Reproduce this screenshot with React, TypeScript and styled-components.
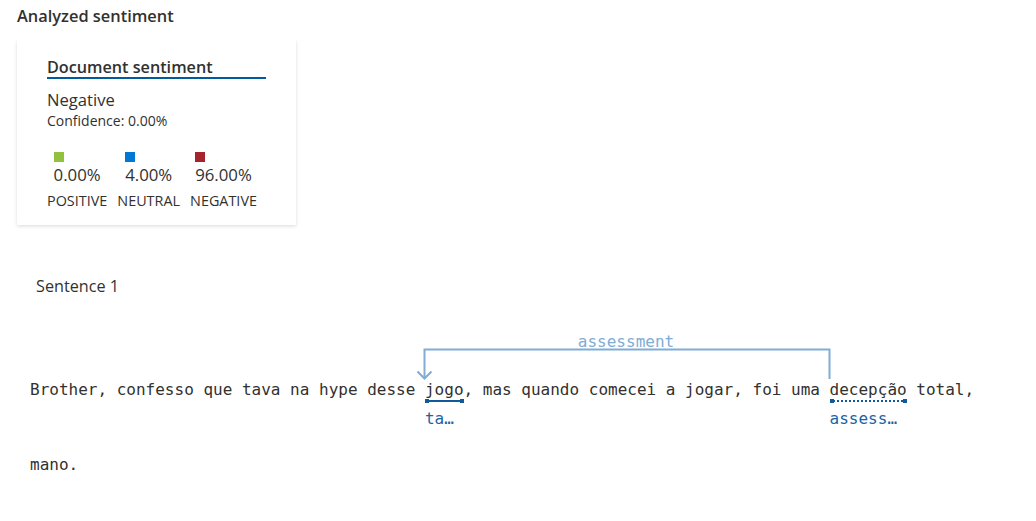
import React from "react";
import styled, { createGlobalStyle } from "styled-components";

const Global = createGlobalStyle`
  html, body { margin: 0; padding: 0; background: #fff; }
  body {
    font-family: "Open Sans", "Noto Sans", sans-serif;
    color: #323130;
  }
`;

const Page = styled.div`
  width: 1036px;
  box-sizing: border-box;
  padding: 5px 17px 0;
`;

const Title = styled.h2`
  margin: 0;
  font-size: 16.4px;
  font-weight: 600;
  line-height: 22px;
`;

const Card = styled.section`
  margin-top: 12px;
  width: 279px;
  height: 186px;
  box-sizing: border-box;
  padding: 18px 30px 0;
  background: #fff;
  box-shadow: 0 1.6px 3.6px rgba(0, 0, 0, 0.13), 0 0.3px 0.9px rgba(0, 0, 0, 0.11);
`;

const CardHeading = styled.h3`
  margin: 0;
  font-size: 16.2px;
  font-weight: 600;
  line-height: 20px;
  border-bottom: 2px solid #005a9e;
`;

const Overall = styled.div`
  margin-top: 10px;
  font-size: 16.6px;
  line-height: 22px;
`;

const Confidence = styled.div`
  font-size: 14px;
  line-height: 18px;
  margin-top: 1px;
`;

const Scores = styled.div`
  display: flex;
  gap: 10px;
  margin-top: 22px;
`;

const ScoreCol = styled.div`
  display: flex;
  flex-direction: column;
  align-items: center;
`;

const ScoreInner = styled.div`
  display: flex;
  flex-direction: column;
  align-items: flex-start;
`;

const Swatch = styled.span<{ $color: string }>`
  width: 10px;
  height: 10px;
  background: ${(p) => p.$color};
`;

const Percent = styled.span`
  margin-top: 2px;
  font-size: 16.8px;
  line-height: 22px;
`;

const ScoreLabel = styled.span`
  margin-top: 6px;
  font-size: 14.4px;
  line-height: 18px;
  text-transform: uppercase;
`;

const SentenceTitle = styled.div`
  margin-top: 49px;
  padding-left: 19px;
  font-size: 16.2px;
  line-height: 24px;
`;

const SentenceBody = styled.div`
  position: relative;
  margin: 33px 0 0 13px;
  padding-top: 48px;
  width: 980px;
  display: flex;
  flex-wrap: wrap;
  align-items: flex-start;
  font-family: "DejaVu Sans Mono", "Liberation Mono", monospace;
  font-size: 16px;
  color: #323130;
`;

const Word = styled.span`
  height: 75px;
  line-height: 22px;
  white-space: pre;
`;

const Annotated = styled.span`
  height: 75px;
  display: flex;
  flex-direction: column;
  line-height: 22px;
  white-space: pre;
`;

const Bar = styled.span<{ $dotted?: boolean }>`
  position: relative;
  display: block;
  margin-top: -2px;
  height: 4px;
  &::before {
    content: "";
    position: absolute;
    left: 0;
    right: 0;
    top: 1px;
    border-top: 2px ${(p) => (p.$dotted ? "dotted" : "solid")} #105a9c;
  }
  &::after {
    content: "";
    position: absolute;
    left: 0;
    right: 0;
    top: 0;
    height: 4px;
    background:
      linear-gradient(#105a9c, #105a9c) left top / 4px 4px no-repeat,
      linear-gradient(#105a9c, #105a9c) right top / 4px 4px no-repeat;
  }
`;

const TokenLabel = styled.span`
  margin-top: 5px;
  color: #1b63a5;
`;

const Arcs = styled.svg`
  position: absolute;
  left: 0;
  top: 0;
  overflow: visible;
  pointer-events: none;
`;

type Tok = string | { word: string; label: string; dotted?: boolean };

const tokens: Tok[] = [
  "Brother, ",
  "confesso ",
  "que ",
  "tava ",
  "na ",
  "hype ",
  "desse ",
  { word: "jogo", label: "ta…" },
  ", ",
  "mas ",
  "quando ",
  "comecei ",
  "a ",
  "jogar, ",
  "foi ",
  "uma ",
  { word: "decepção", label: "assess…", dotted: true },
  " ",
  "total, ",
  "mano.",
];

const scores = [
  { color: "#92c13e", value: "0.00%", label: "Positive" },
  { color: "#0078d4", value: "4.00%", label: "Neutral" },
  { color: "#a4262c", value: "96.00%", label: "Negative" },
];

const ARC = "#80acd6";

export default function App() {
  return (
    <>
      <Global />
      <Page>
        <Title>Analyzed sentiment</Title>
        <Card>
          <CardHeading>Document sentiment</CardHeading>
          <Overall>Negative</Overall>
          <Confidence>Confidence: 0.00%</Confidence>
          <Scores>
            {scores.map((s) => (
              <ScoreCol key={s.label}>
                <ScoreInner>
                  <Swatch $color={s.color} />
                  <Percent>{s.value}</Percent>
                </ScoreInner>
                <ScoreLabel>{s.label}</ScoreLabel>
              </ScoreCol>
            ))}
          </Scores>
        </Card>
        <SentenceTitle>Sentence 1</SentenceTitle>
        <SentenceBody>
          <Arcs width="980" height="50">
            <text
              x="596"
              y="16"
              textAnchor="middle"
              fill={ARC}
              fontFamily="DejaVu Sans Mono, monospace"
              fontSize="16"
            >
              assessment
            </text>
            <path
              d="M394.5 48 V18.5 H799.5 V48"
              fill="none"
              stroke={ARC}
              strokeWidth="2"
            />
            <path
              d="M387.5 40.5 L394.5 47.5 L401.5 40.5"
              fill="none"
              stroke={ARC}
              strokeWidth="2"
            />
          </Arcs>
          {tokens.map((t, i) =>
            typeof t === "string" ? (
              <Word key={i}>{t}</Word>
            ) : (
              <Annotated key={i}>
                <span>{t.word}</span>
                <Bar $dotted={t.dotted} />
                <TokenLabel>{t.label}</TokenLabel>
              </Annotated>
            )
          )}
        </SentenceBody>
      </Page>
    </>
  );
}
